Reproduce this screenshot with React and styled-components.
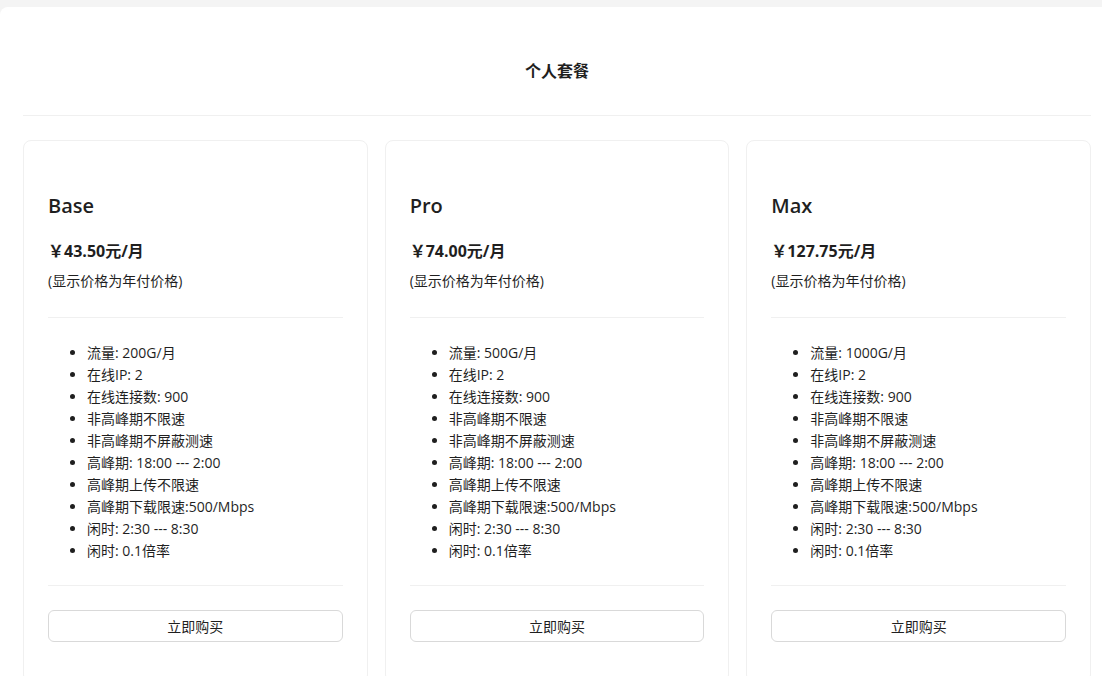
import styled, { createGlobalStyle } from 'styled-components';

const GlobalStyle = createGlobalStyle`
  html, body {
    margin: 0;
    padding: 0;
    background: #f4f4f4;
    overflow: hidden;
  }
  body {
    font-family: "Open Sans", "Noto Sans CJK SC", sans-serif;
    color: #1f1f1f;
  }
`;

const Page = styled.div`
  padding-top: 7px;
`;

const Panel = styled.div`
  background: #fff;
  border-radius: 8px 0 0 0;
  padding: 0 11px 40px 23px;
  min-height: 700px;
`;

const Header = styled.div`
  padding: 52px 0 32px;
  border-bottom: 1px solid #f0f0f0;
  text-align: center;
  font-size: 16px;
  line-height: 24px;
  font-weight: 700;
`;

const Grid = styled.div`
  display: grid;
  grid-template-columns: repeat(3, 1fr);
  gap: 17px;
  margin-top: 24px;
`;

const Card = styled.div`
  border: 1px solid #f0f0f0;
  border-radius: 8px;
  padding: 51px 24px 40px;
`;

const Title = styled.div`
  font-size: 20px;
  line-height: 28px;
  font-weight: 600;
`;

const Price = styled.div`
  margin-top: 19px;
  font-size: 16px;
  line-height: 24px;
  font-weight: 700;
`;

const Note = styled.div`
  margin-top: 8px;
  font-size: 14px;
  line-height: 20px;
`;

const Divider = styled.div`
  height: 1px;
  background: #f0f0f0;
  margin-top: ${(props) => props.top}px;
`;

const Features = styled.ul`
  margin: 24px 0 0;
  padding-left: 39px;
  font-size: 14px;
  line-height: 22px;
`;

const BuyButton = styled.button`
  display: block;
  width: 100%;
  height: 32px;
  margin-top: 24px;
  background: #fff;
  border: 1px solid #d9d9d9;
  border-radius: 6px;
  font-family: inherit;
  font-size: 14px;
  color: #1f1f1f;
  cursor: pointer;
`;

const plans = [
  { name: 'Base', price: '43.50', traffic: '200G' },
  { name: 'Pro', price: '74.00', traffic: '500G' },
  { name: 'Max', price: '127.75', traffic: '1000G' },
];

function App() {
  return (
    <Page>
      <GlobalStyle />
      <Panel>
        <Header>个人套餐</Header>
        <Grid>
          {plans.map((p) => (
            <Card key={p.name}>
              <Title>{p.name}</Title>
              <Price>￥{p.price}元/月</Price>
              <Note>(显示价格为年付价格)</Note>
              <Divider top={26} />
              <Features>
                <li>流量: {p.traffic}/月</li>
                <li>在线IP: 2</li>
                <li>在线连接数: 900</li>
                <li>非高峰期不限速</li>
                <li>非高峰期不屏蔽测速</li>
                <li>高峰期: 18:00 --- 2:00</li>
                <li>高峰期上传不限速</li>
                <li>高峰期下载限速:500/Mbps</li>
                <li>闲时: 2:30 --- 8:30</li>
                <li>闲时: 0.1倍率</li>
              </Features>
              <Divider top={23} />
              <BuyButton>立即购买</BuyButton>
            </Card>
          ))}
        </Grid>
      </Panel>
    </Page>
  );
}

export default App;
